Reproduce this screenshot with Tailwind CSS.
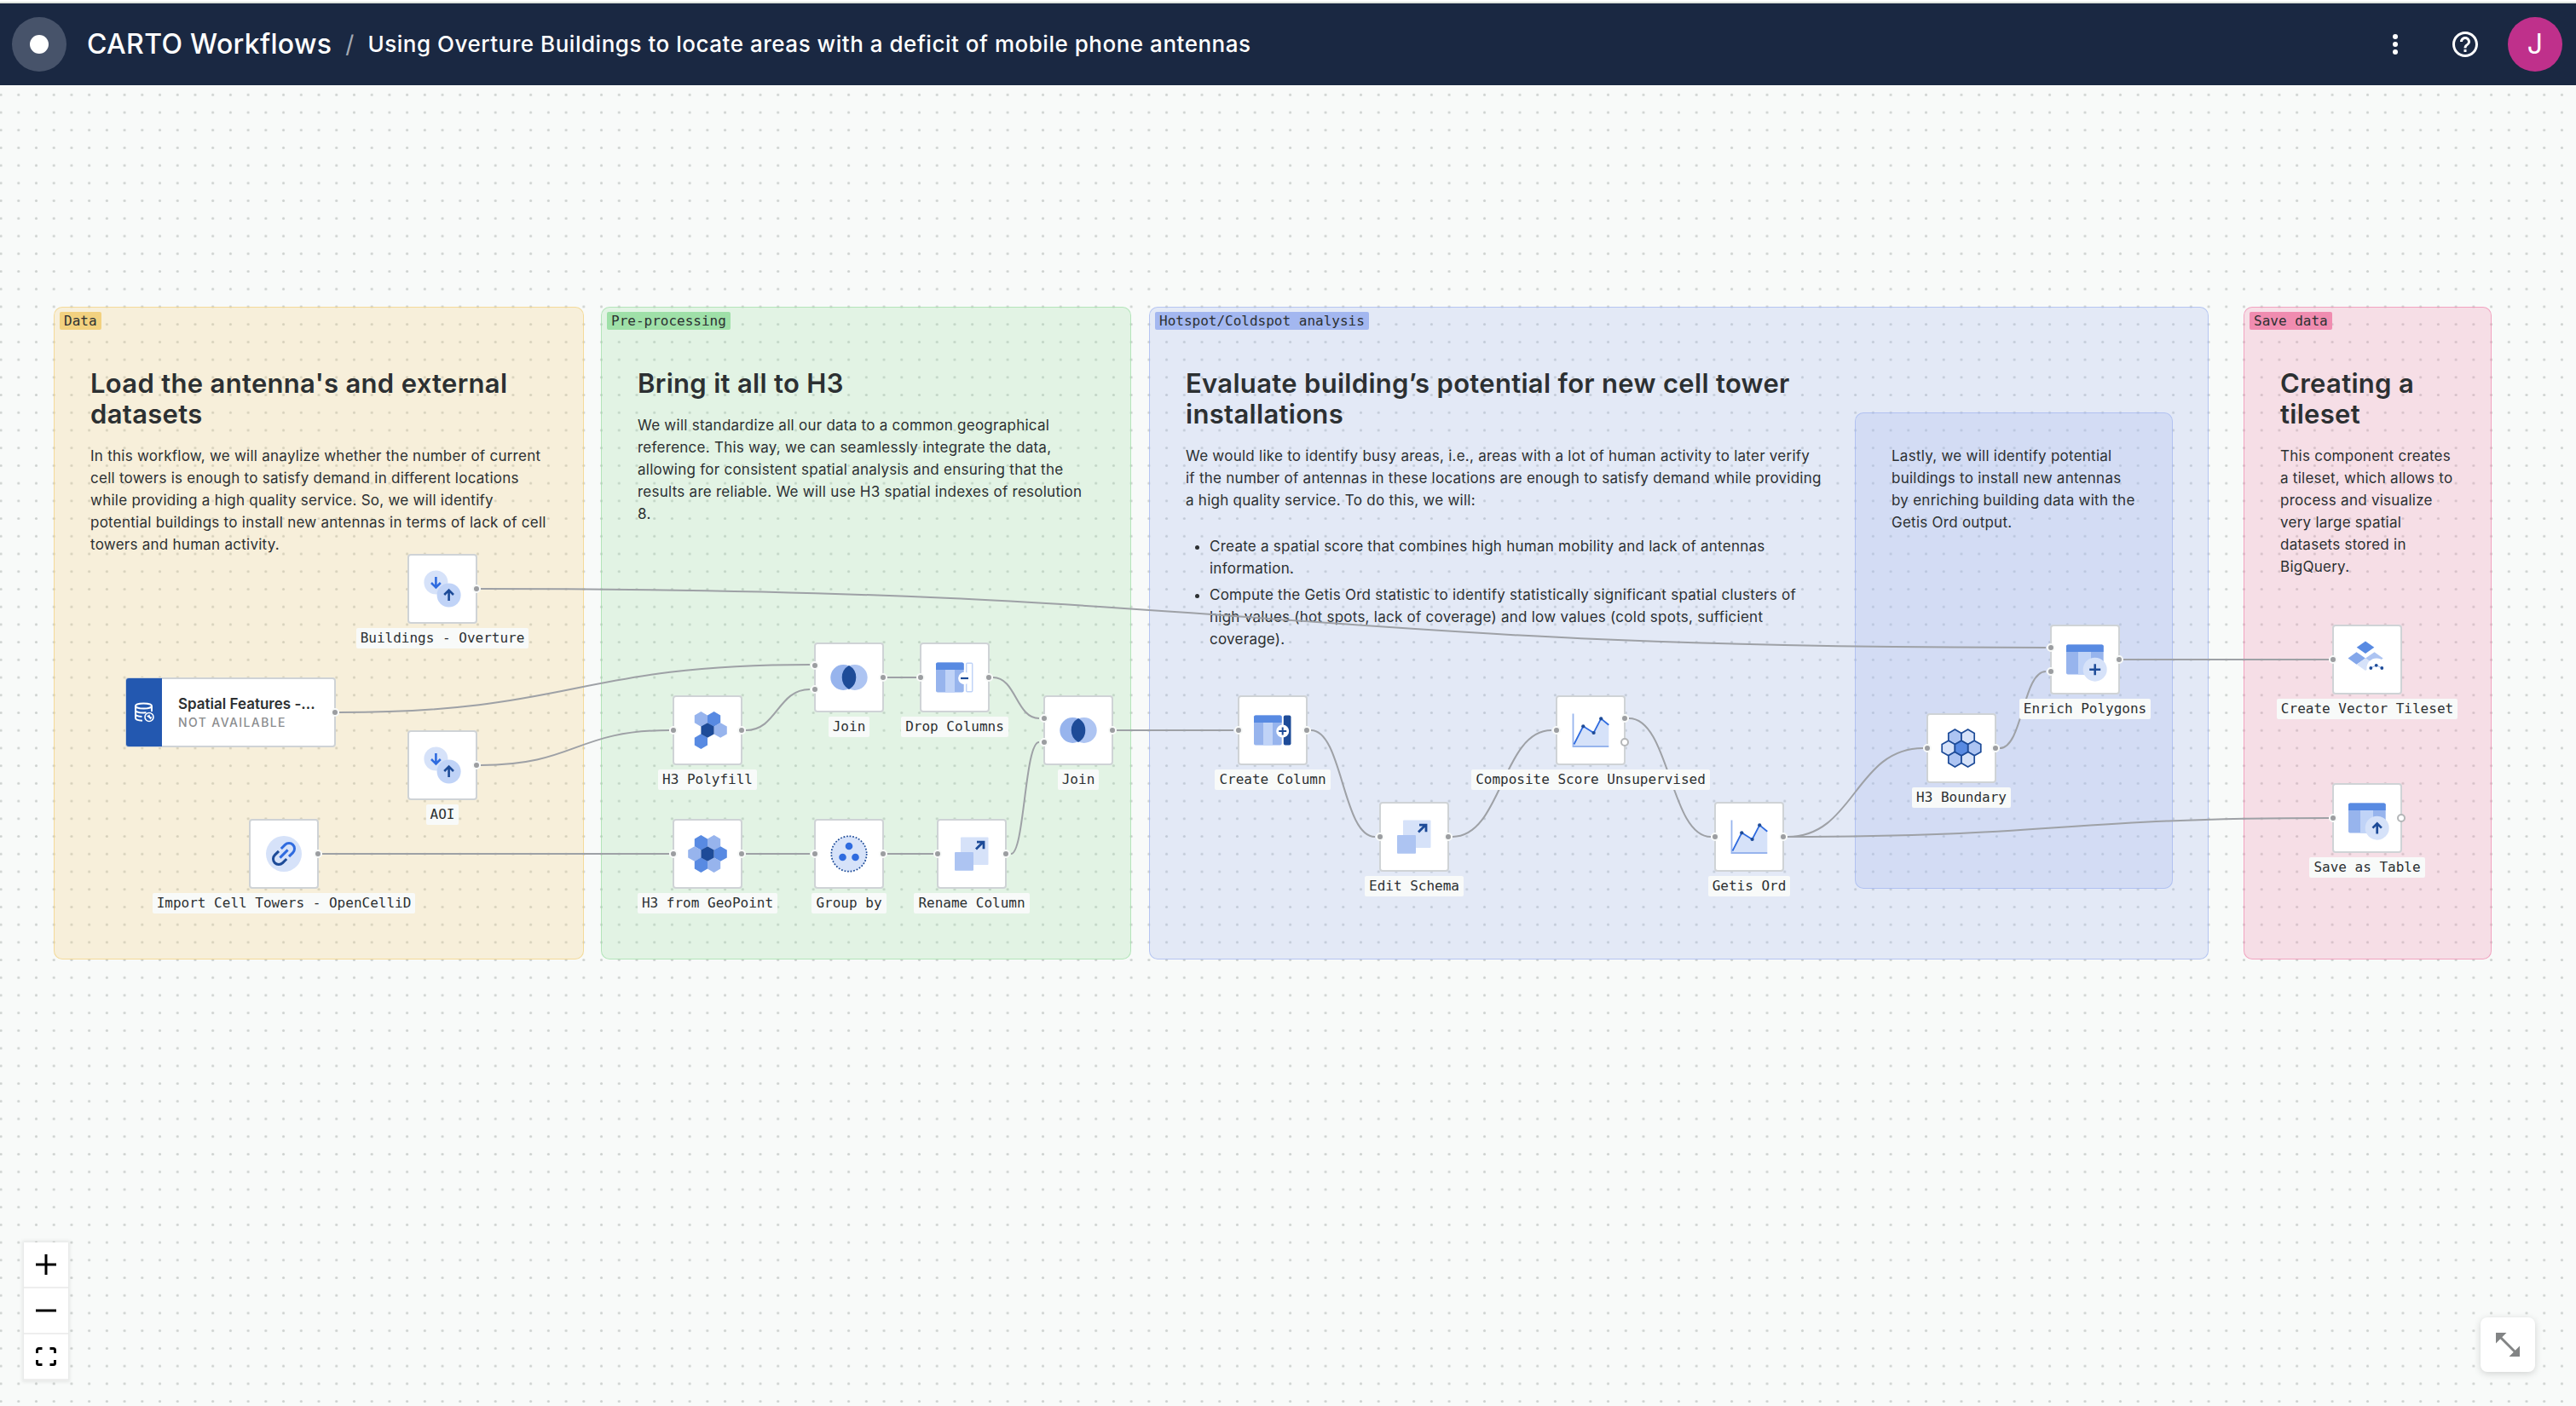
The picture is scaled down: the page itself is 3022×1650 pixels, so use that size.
<!DOCTYPE html>
<html lang="en">
<head>
<meta charset="utf-8">
<meta name="viewport" content="width=device-width, initial-scale=1">
<title>CARTO Workflows</title>
<script src="https://cdn.jsdelivr.net/npm/@tailwindcss/browser@4"></script>
</head>
<body class="flex h-screen flex-col overflow-hidden bg-[#f8faf9] font-['Inter',sans-serif] text-[#2c3032]">

<!-- Shared icons, drawn around the centre of a 48 x 48 box -->
<svg class="hidden" aria-hidden="true">
  <defs>
    <path id="hex" d="M0-8.8 7.6-4.4V4.4L0 8.8-7.6 4.4V-4.4Z"/>
    <symbol id="i-import" viewBox="-24 -24 48 48">
      <circle cx="-7.6" cy="-7.5" r="14" fill="#d6e2f9"/><circle cx="7.6" cy="7.5" r="14" fill="#c0d3f7"/>
      <path d="M-7.6-14V-1.5M-13-7l5.4 5.4L-2.2-7" fill="none" stroke="#2f6bdf" stroke-width="2.6"/>
      <path d="M7.6 14V1.5M2.2 7l5.4-5.4L13 7" fill="none" stroke="#1d4b98" stroke-width="2.6"/>
    </symbol>
    <symbol id="i-link" viewBox="-24 -24 48 48">
      <circle r="21" fill="#d6e2f9"/>
      <g transform="rotate(-45)" fill="none" stroke-width="3">
        <path d="M-2-6.5h-6.5a6.5 6.5 0 0 0 0 13H-2" stroke="#1d4b98"/>
        <path d="M2-6.5h6.5a6.5 6.5 0 0 1 0 13H2M-6.5 0h13" stroke="#2f6bdf"/>
      </g>
    </symbol>
    <symbol id="i-polyfill" viewBox="-24 -24 48 48">
      <use href="#hex" x="-7.6" y="-13.1" fill="#97b4ed"/><use href="#hex" x="7.6" y="-13.1" fill="#588ae2"/>
      <use href="#hex" x="15.2" fill="#97b4ed"/><use href="#hex" x="-7.6" y="13.1" fill="#588ae2"/><use href="#hex" fill="#1d4b98"/>
    </symbol>
    <symbol id="i-geopoint" viewBox="-24 -24 48 48">
      <use href="#hex" x="-7.6" y="-13.1" fill="#588ae2"/><use href="#hex" x="7.6" y="-13.1" fill="#97b4ed"/>
      <use href="#hex" x="-15.2" fill="#97b4ed"/><use href="#hex" x="15.2" fill="#588ae2"/>
      <use href="#hex" x="-7.6" y="13.1" fill="#588ae2"/><use href="#hex" x="7.6" y="13.1" fill="#97b4ed"/><use href="#hex" fill="#1d4b98"/>
    </symbol>
    <symbol id="i-boundary" viewBox="-24 -24 48 48">
      <g stroke="#1d4b98" stroke-width="1.7">
        <use href="#hex" x="-7.6" y="-13.1" fill="#adc4f2"/><use href="#hex" x="7.6" y="-13.1" fill="#d6e2f9"/>
        <use href="#hex" x="-15.2" fill="#d6e2f9"/><use href="#hex" x="15.2" fill="#adc4f2"/>
        <use href="#hex" x="-7.6" y="13.1" fill="#adc4f2"/><use href="#hex" x="7.6" y="13.1" fill="#d6e2f9"/><use href="#hex" fill="#588ae2"/>
      </g>
    </symbol>
    <symbol id="i-join" viewBox="-24 -24 48 48">
      <circle cx="6.7" r="15" fill="#adc4f2"/><circle cx="-6.7" r="15" fill="#97b4ed"/>
      <path d="M0-14A16 16 0 0 1 0 14A16 16 0 0 1 0-14Z" fill="#1d4b98"/>
    </symbol>
    <symbol id="i-drop" viewBox="-24 -24 48 48">
      <rect x="-22" y="-17.5" width="32.7" height="35" rx="2" fill="#97b4ed"/><rect x="-11" y="-9" width="11" height="26.5" fill="#c0d3f7"/>
      <path d="M-20-17.5H8.700a2 2 0 0 1 2 2V-9H-22v-6.500a2 2 0 0 1 2-2Z" fill="#588ae2"/>
      <rect x="13.700" y="-16.700" width="7" height="33.400" rx="1" fill="#fff" stroke="#c0d3f7" stroke-width="1.500"/>
      <circle cx="11.300" cy="1" r="7.200" fill="#fff"/><path d="M7 1h9" stroke="#1d4b98" stroke-width="2.200"/>
    </symbol>
    <symbol id="i-create" viewBox="-24 -24 48 48">
      <rect x="-22" y="-17.5" width="32.7" height="35" rx="2" fill="#97b4ed"/><rect x="-11" y="-9" width="11" height="26.5" fill="#c0d3f7"/>
      <path d="M-20-17.5H8.700a2 2 0 0 1 2 2V-9H-22v-6.500a2 2 0 0 1 2-2Z" fill="#588ae2"/>
      <rect x="12.800" y="-17.500" width="8.700" height="35" rx="2" fill="#1d4b98"/>
      <circle cx="11.700" cy="1" r="7.500" fill="#fff"/><path d="M7.200 1h9M11.700-3.500v9" stroke="#1d4b98" stroke-width="2"/>
    </symbol>
    <symbol id="table" viewBox="-24 -24 48 48">
      <rect x="-22" y="-17.5" width="43.7" height="35" rx="2" fill="#97b4ed"/><rect x="-8" y="-9" width="15" height="26.5" fill="#c0d3f7"/>
      <path d="M-20-17.5H19.700a2 2 0 0 1 2 2V-9H-22v-6.500a2 2 0 0 1 2-2Z" fill="#588ae2"/>
    </symbol>
    <symbol id="i-enrich" viewBox="-26 -26 52 52">
      <use href="#table" x="-24" y="-24" width="48" height="48"/>
      <circle cx="11.700" cy="11.700" r="14" fill="#d6e2f9"/><path d="M5.200 11.700h13M11.700 5.200v13" stroke="#1d4b98" stroke-width="2.500"/>
    </symbol>
    <symbol id="i-save" viewBox="-26 -26 52 52">
      <use href="#table" x="-24" y="-24" width="48" height="48"/>
      <circle cx="11.700" cy="11.700" r="14" fill="#d6e2f9"/><path d="M11.700 18.500V6.500M6.500 11.600l5.200-5.200 5.200 5.200" fill="none" stroke="#1d4b98" stroke-width="2.700"/>
    </symbol>
    <symbol id="i-group" viewBox="-24 -24 48 48">
      <circle r="20.700" fill="#d6e2f9" stroke="#1d4b98" stroke-width="1.700" stroke-dasharray="1.800 1.812"/>
      <g fill="#2f6bdf"><circle cy="-9" r="4.300"/><circle cx="-7.500" cy="4" r="4.300"/><circle cx="7.500" cy="4" r="4.300"/></g>
    </symbol>
    <symbol id="i-schema" viewBox="-24 -24 48 48">
      <rect x="-13" y="-19.500" width="32.500" height="32.500" rx="1" fill="#d6e2f9"/><rect x="-20" y="-2" width="22" height="21.700" rx="1" fill="#adc4f2"/>
      <path d="M5-5.500 13.500-14M6-13.800h8v8" fill="none" stroke="#1d4b98" stroke-width="2.800"/>
    </symbol>
    <symbol id="i-chart" viewBox="-24 -24 48 48">
      <path d="M-20 18-8.700-4.700 3.600 3 12.200-13.700 21.300-6.300V18Z" fill="#d6e2f9"/>
      <path d="M-20.500-19.500V19H21.300" fill="none" stroke="#97b4ed" stroke-width="1.800"/>
      <path d="M-19.500 16.500-8.700-4.700 3.600 3 12.200-13.700 21.300-6.300" fill="none" stroke="#2f6bdf" stroke-width="1.800"/>
      <g fill="#1d4b98"><circle cx="-8.700" cy="-4.700" r="2.100"/><circle cx="3.600" cy="3" r="2.100"/><circle cx="12.200" cy="-13.700" r="2.100"/></g>
    </symbol>
    <symbol id="i-tileset" viewBox="-24 -24 48 48">
      <path d="M-2-21.500 8.300-14.300-2-7-12.300-14.300Z" fill="#588ae2"/><path d="M-12.500-8.700-2-1.500-12.500 5.700-22.500-1.500Z" fill="#84a7ea"/>
      <path d="M8.500-8.700 18.700-1.500 8.500 5.700-2-1.500Z" fill="#adc4f2"/><path d="M-2-1.500 8.300 5.700-2 13-12.300 5.700Z" fill="#d6e2f9"/>
      <circle cx="11" cy="10" r="11.500" fill="#fff"/><path d="M4.300 10 10.700 6.800 17.300 10" fill="none" stroke="#97b4ed" stroke-width="1"/>
      <g fill="#1d4b98"><circle cx="4.300" cy="10" r="1.900"/><circle cx="10.700" cy="6.800" r="1.900"/><circle cx="17.300" cy="10" r="1.900"/></g>
    </symbol>
  </defs>
</svg>

<div class="border-b-2 border-[#dfe5df] bg-white pt-0.5"></div>
<header class="flex h-24 shrink-0 items-center bg-[#1a2842] pr-4 pl-3.5 text-white">
  <button type="button" aria-label="Workflows home" class="flex size-16 items-center justify-center rounded-full bg-[#47536a]"><span class="size-[22px] rounded-full bg-white"></span></button>
  <nav aria-label="Breadcrumb" class="ml-6 flex items-center whitespace-nowrap font-medium">
    <a href="#" class="text-[32px] leading-10 tracking-[0.01em]">CARTO Workflows</a>
    <span class="mx-4 text-[28px] leading-10 font-normal text-[#a3a9b3]">/</span>
    <h1 class="text-[26px] leading-10 tracking-[0.02em]">Using Overture Buildings to locate areas with a deficit of mobile phone antennas</h1>
  </nav>
  <div class="ml-auto flex items-center">
    <button type="button" aria-label="More options" class="flex size-12 items-center justify-center"><svg class="size-9" viewBox="0 0 36 36" fill="#fff"><circle cx="18" cy="9" r="3"/><circle cx="18" cy="18" r="3"/><circle cx="18" cy="27" r="3"/></svg></button>
    <button type="button" aria-label="Help" class="ml-[34px] flex size-12 items-center justify-center"><svg class="size-9" viewBox="0 0 24 24" fill="#fff"><path d="M11 18h2v-2h-2v2zm1-16C6.480 2 2 6.480 2 12s4.480 10 10 10 10-4.480 10-10S17.520 2 12 2zm0 18c-4.410 0-8-3.590-8-8s3.590-8 8-8 8 3.590 8 8-3.590 8-8 8zm0-14c-2.210 0-4 1.790-4 4h2c0-1.100.900-2 2-2s2 .900 2 2c0 2-3 1.750-3 5h2c0-2.250 3-2.500 3-5 0-2.210-1.790-4-4-4z"/></svg></button>
    <button type="button" aria-label="Account" class="ml-[26px] flex size-16 items-center justify-center rounded-full bg-[#bf308b] text-[32px]">J</button>
  </div>
</header>

<main class="relative flex-1 overflow-hidden">
  <!-- Dotted grid -->
  <svg class="absolute inset-0 size-full" aria-hidden="true">
    <defs><pattern id="grid" width="20" height="20" patternUnits="userSpaceOnUse" patternTransform="translate(-9.300 .900) scale(1.036)"><circle cx="10" cy="10" r="1.500" fill="#cdd1cf"/></pattern></defs>
    <rect width="100%" height="100%" fill="url(#grid)"/>
  </svg>

  <!-- Notes -->
  <section class="absolute top-[260px] left-[63px] h-[766px] w-[622px] rounded-[10px] border border-[#f2d17f]/70 bg-[#f2d17f]/25 px-[42px] pt-[71px]">
    <span class="absolute top-[5px] left-1.5 rounded-xs bg-[#f2d17f] px-[5px] font-['DejaVu_Sans_Mono',monospace] text-base leading-[21px]">Data</span>
    <h2 class="text-[31px] leading-9 font-semibold tracking-[0.01em]">Load the antenna's and external datasets</h2>
    <p class="mt-[18px] text-[17px] leading-[26px] tracking-[0.015em]">In this workflow, we will anaylize whether the number of current cell towers is enough to satisfy demand in different locations while providing a high quality service. So, we will identify potential buildings to install new antennas in terms of lack of cell towers and human activity.</p>
  </section>
  <section class="absolute top-[260px] left-[705px] h-[766px] w-[622px] rounded-[10px] border border-[#9fe0a8]/70 bg-[#9fe0a8]/25 px-[42px] pt-[71px]">
    <span class="absolute top-[5px] left-1.5 rounded-xs bg-[#9fe0a8] px-[5px] font-['DejaVu_Sans_Mono',monospace] text-base leading-[21px]">Pre-processing</span>
    <h2 class="text-[31px] leading-9 font-semibold tracking-[0.01em]">Bring it all to H3</h2>
    <p class="mt-[18px] text-[17px] leading-[26px] tracking-[0.015em]">We will standardize all our data to a common geographical reference. This way, we can seamlessly integrate the data, allowing for consistent spatial analysis and ensuring that the results are reliable. We will use H3 spatial indexes of resolution 8.</p>
  </section>
  <section class="absolute top-[260px] left-[1348px] h-[766px] w-[1243px] rounded-[10px] border border-[#a3b7f0]/70 bg-[#a3b7f0]/25 px-[42px] pt-[71px]">
    <span class="absolute top-[5px] left-1.5 rounded-xs bg-[#a3b7f0] px-[5px] font-['DejaVu_Sans_Mono',monospace] text-base leading-[21px]">Hotspot/Coldspot analysis</span>
    <div class="w-[750px]">
      <h2 class="text-[31px] leading-9 font-semibold tracking-[0.01em]">Evaluate building’s potential for new cell tower installations</h2>
      <p class="mt-[18px] text-[17px] leading-[26px] tracking-[0.015em]">We would like to identify busy areas, i.e., areas with a lot of human activity to later verify<br>if the number of antennas in these locations are enough to satisfy demand while providing a high quality service. To do this, we will:</p>
      <ul class="mt-7 flex list-disc flex-col gap-[5px] pl-7 text-[17px] leading-[26px] tracking-[0.015em]">
        <li>Create a spatial score that combines high human mobility and lack of antennas information.</li>
        <li>Compute the Getis Ord statistic to identify statistically significant spatial clusters of high values (hot spots, lack of coverage) and low values (cold spots, sufficient coverage).</li>
      </ul>
    </div>
  </section>
  <section class="absolute top-[384px] left-[2176px] h-[559px] w-[373px] rounded-[10px] border border-[#a3b7f0]/70 bg-[#a3b7f0]/25 px-[42px] pt-[37px]">
    <p class="text-[17px] leading-[26px] tracking-[0.015em]">Lastly, we will identify potential buildings to install new antennas by enriching building data with the Getis Ord output.</p>
  </section>
  <section class="absolute top-[260px] left-[2632px] h-[766px] w-[291px] rounded-[10px] border border-[#f08cb0]/70 bg-[#f08cb0]/25 px-[42px] pt-[71px]">
    <span class="absolute top-[5px] left-1.5 rounded-xs bg-[#f08cb0] px-[5px] font-['DejaVu_Sans_Mono',monospace] text-base leading-[21px]">Save data</span>
    <h2 class="text-[31px] leading-9 font-semibold tracking-[0.01em]">Creating a tileset</h2>
    <p class="mt-[18px] text-[17px] leading-[26px] tracking-[0.015em]">This component creates a tileset, which allows to process and visualize very large spatial datasets stored in BigQuery.</p>
  </section>

  <!-- Connections -->
  <svg class="absolute inset-0 size-full" fill="none" stroke="#9ea1a6" stroke-width="2" aria-hidden="true">
    <path d="M564 591C1482 591 1482 660 2400 660"/>
    <path d="M398 736C674 736 674 680 950 680"/>
    <path d="M564 798C675 798 675 757 785 757"/>
    <path d="M378 902H785M875 902H950M1041 902H1095M1041 695H1075M1310 757H1447M2491 674H2732"/>
    <path d="M875 757C912 757 912 709 950 709"/>
    <path d="M1165 695C1192 695 1192 743 1219 743"/>
    <path d="M1186 902C1202 902 1202 771 1219 771"/>
    <path d="M1538 757C1575 757 1575 882 1613 882"/>
    <path d="M1704 882C1762 882 1762 757 1820 757"/>
    <path d="M1911 743C1959 743 1959 882 2007 882"/>
    <path d="M2097 882C2176 882 2176 778 2256 778"/>
    <path d="M2097 882C2415 882 2415 860 2732 860"/>
    <path d="M2346 778C2373 778 2373 688 2400 688"/>
  </svg>

  <!-- Nodes -->
  <article class="absolute top-[695px] left-[147px] flex h-[82px] w-[247px] rounded border-2 border-[#cfd3d6] bg-white">
    <div class="-my-px -ml-px flex w-[42px] shrink-0 items-center justify-center rounded-l-[3px] bg-[#2358b0]">
      <svg class="size-6" viewBox="0 0 24 24" fill="none" stroke="#fff" stroke-width="2"><ellipse cx="11.500" cy="4.500" rx="9.500" ry="3"/><path d="M2 4.500v14c0 1.700 3.500 3 8 3.200M21 4.500V11M2 9.500c0 1.600 4 3 9.500 3 1.500 0 2-.1 3-.2M2 14c0 1.600 3 2.800 7.500 3"/><circle cx="18" cy="17.500" r="5" fill="#2358b0" stroke-width="1.600"/><path d="M15 16.500l3.500-2 .5 2.500 2.500.5-2 3-1.500-2Z" fill="#fff" stroke="none"/></svg>
    </div>
    <div class="flex min-w-0 flex-1 flex-col justify-center px-[19px]">
      <h3 class="overflow-hidden text-[17px] leading-6 font-semibold text-ellipsis whitespace-nowrap">Spatial Features -...</h3>
      <p class="text-sm leading-5 font-medium tracking-widest whitespace-nowrap text-[#8a8c8e]">NOT AVAILABLE</p>
    </div>
    <span class="absolute top-[34px] -right-[6px] size-2.5 rounded-full border-2 border-[#f8faf9] bg-[#9b9da0]"></span>
  </article>

  <article class="absolute top-[550px] left-[478px] flex w-[82px] flex-col items-center gap-[5px]">
    <div class="relative flex size-[82px] items-center justify-center rounded border-2 border-[#cfd3d6] bg-white"><svg class="size-12"><use href="#i-import"/></svg>
      <span class="absolute top-[34px] -right-[6px] size-2.5 rounded-full border-2 border-[#f8faf9] bg-[#9b9da0]"></span></div>
    <h3 class="rounded-xs bg-[#f8faf9] px-[5px] font-['DejaVu_Sans_Mono',monospace] text-base leading-6 whitespace-nowrap">Buildings - Overture</h3>
  </article>
  <article class="absolute top-[757px] left-[478px] flex w-[82px] flex-col items-center gap-[5px]">
    <div class="relative flex size-[82px] items-center justify-center rounded border-2 border-[#cfd3d6] bg-white"><svg class="size-12"><use href="#i-import"/></svg>
      <span class="absolute top-[34px] -right-[6px] size-2.5 rounded-full border-2 border-[#f8faf9] bg-[#9b9da0]"></span></div>
    <h3 class="rounded-xs bg-[#f8faf9] px-[5px] font-['DejaVu_Sans_Mono',monospace] text-base leading-6 whitespace-nowrap">AOI</h3>
  </article>
  <article class="absolute top-[861px] left-[292px] flex w-[82px] flex-col items-center gap-[5px]">
    <div class="relative flex size-[82px] items-center justify-center rounded border-2 border-[#cfd3d6] bg-white"><svg class="size-12"><use href="#i-link"/></svg>
      <span class="absolute top-[34px] -right-[6px] size-2.5 rounded-full border-2 border-[#f8faf9] bg-[#9b9da0]"></span></div>
    <h3 class="rounded-xs bg-[#f8faf9] px-[5px] font-['DejaVu_Sans_Mono',monospace] text-base leading-6 whitespace-nowrap">Import Cell Towers - OpenCelliD</h3>
  </article>

  <article class="absolute top-[716px] left-[789px] flex w-[82px] flex-col items-center gap-[5px]">
    <div class="relative flex size-[82px] items-center justify-center rounded border-2 border-[#cfd3d6] bg-white"><svg class="size-12"><use href="#i-polyfill"/></svg>
      <span class="absolute top-[34px] -left-[6px] size-2.5 rounded-full border-2 border-[#f8faf9] bg-[#9b9da0]"></span>
      <span class="absolute top-[34px] -right-[6px] size-2.5 rounded-full border-2 border-[#f8faf9] bg-[#9b9da0]"></span></div>
    <h3 class="rounded-xs bg-[#f8faf9] px-[5px] font-['DejaVu_Sans_Mono',monospace] text-base leading-6 whitespace-nowrap">H3 Polyfill</h3>
  </article>
  <article class="absolute top-[654px] left-[955px] flex w-[82px] flex-col items-center gap-[5px]">
    <div class="relative flex size-[82px] items-center justify-center rounded border-2 border-[#cfd3d6] bg-white"><svg class="size-12"><use href="#i-join"/></svg>
      <span class="absolute top-5 -left-[6px] size-2.5 rounded-full border-2 border-[#f8faf9] bg-[#9b9da0]"></span>
      <span class="absolute top-12 -left-[6px] size-2.5 rounded-full border-2 border-[#f8faf9] bg-[#9b9da0]"></span>
      <span class="absolute top-[34px] -right-[6px] size-2.5 rounded-full border-2 border-[#f8faf9] bg-[#9b9da0]"></span></div>
    <h3 class="rounded-xs bg-[#f8faf9] px-[5px] font-['DejaVu_Sans_Mono',monospace] text-base leading-6 whitespace-nowrap">Join</h3>
  </article>
  <article class="absolute top-[654px] left-[1079px] flex w-[82px] flex-col items-center gap-[5px]">
    <div class="relative flex size-[82px] items-center justify-center rounded border-2 border-[#cfd3d6] bg-white"><svg class="size-12"><use href="#i-drop"/></svg>
      <span class="absolute top-[34px] -left-[6px] size-2.5 rounded-full border-2 border-[#f8faf9] bg-[#9b9da0]"></span>
      <span class="absolute top-[34px] -right-[6px] size-2.5 rounded-full border-2 border-[#f8faf9] bg-[#9b9da0]"></span></div>
    <h3 class="rounded-xs bg-[#f8faf9] px-[5px] font-['DejaVu_Sans_Mono',monospace] text-base leading-6 whitespace-nowrap">Drop Columns</h3>
  </article>
  <article class="absolute top-[716px] left-[1224px] flex w-[82px] flex-col items-center gap-[5px]">
    <div class="relative flex size-[82px] items-center justify-center rounded border-2 border-[#cfd3d6] bg-white"><svg class="size-12"><use href="#i-join"/></svg>
      <span class="absolute top-5 -left-[6px] size-2.5 rounded-full border-2 border-[#f8faf9] bg-[#9b9da0]"></span>
      <span class="absolute top-12 -left-[6px] size-2.5 rounded-full border-2 border-[#f8faf9] bg-[#9b9da0]"></span>
      <span class="absolute top-[34px] -right-[6px] size-2.5 rounded-full border-2 border-[#f8faf9] bg-[#9b9da0]"></span></div>
    <h3 class="rounded-xs bg-[#f8faf9] px-[5px] font-['DejaVu_Sans_Mono',monospace] text-base leading-6 whitespace-nowrap">Join</h3>
  </article>
  <article class="absolute top-[861px] left-[789px] flex w-[82px] flex-col items-center gap-[5px]">
    <div class="relative flex size-[82px] items-center justify-center rounded border-2 border-[#cfd3d6] bg-white"><svg class="size-12"><use href="#i-geopoint"/></svg>
      <span class="absolute top-[34px] -left-[6px] size-2.5 rounded-full border-2 border-[#f8faf9] bg-[#9b9da0]"></span>
      <span class="absolute top-[34px] -right-[6px] size-2.5 rounded-full border-2 border-[#f8faf9] bg-[#9b9da0]"></span></div>
    <h3 class="rounded-xs bg-[#f8faf9] px-[5px] font-['DejaVu_Sans_Mono',monospace] text-base leading-6 whitespace-nowrap">H3 from GeoPoint</h3>
  </article>
  <article class="absolute top-[861px] left-[955px] flex w-[82px] flex-col items-center gap-[5px]">
    <div class="relative flex size-[82px] items-center justify-center rounded border-2 border-[#cfd3d6] bg-white"><svg class="size-12"><use href="#i-group"/></svg>
      <span class="absolute top-[34px] -left-[6px] size-2.5 rounded-full border-2 border-[#f8faf9] bg-[#9b9da0]"></span>
      <span class="absolute top-[34px] -right-[6px] size-2.5 rounded-full border-2 border-[#f8faf9] bg-[#9b9da0]"></span></div>
    <h3 class="rounded-xs bg-[#f8faf9] px-[5px] font-['DejaVu_Sans_Mono',monospace] text-base leading-6 whitespace-nowrap">Group by</h3>
  </article>
  <article class="absolute top-[861px] left-[1099px] flex w-[82px] flex-col items-center gap-[5px]">
    <div class="relative flex size-[82px] items-center justify-center rounded border-2 border-[#cfd3d6] bg-white"><svg class="size-12"><use href="#i-schema"/></svg>
      <span class="absolute top-[34px] -left-[6px] size-2.5 rounded-full border-2 border-[#f8faf9] bg-[#9b9da0]"></span>
      <span class="absolute top-[34px] -right-[6px] size-2.5 rounded-full border-2 border-[#f8faf9] bg-[#9b9da0]"></span></div>
    <h3 class="rounded-xs bg-[#f8faf9] px-[5px] font-['DejaVu_Sans_Mono',monospace] text-base leading-6 whitespace-nowrap">Rename Column</h3>
  </article>

  <article class="absolute top-[716px] left-[1452px] flex w-[82px] flex-col items-center gap-[5px]">
    <div class="relative flex size-[82px] items-center justify-center rounded border-2 border-[#cfd3d6] bg-white"><svg class="size-12"><use href="#i-create"/></svg>
      <span class="absolute top-[34px] -left-[6px] size-2.5 rounded-full border-2 border-[#f8faf9] bg-[#9b9da0]"></span>
      <span class="absolute top-[34px] -right-[6px] size-2.5 rounded-full border-2 border-[#f8faf9] bg-[#9b9da0]"></span></div>
    <h3 class="rounded-xs bg-[#f8faf9] px-[5px] font-['DejaVu_Sans_Mono',monospace] text-base leading-6 whitespace-nowrap">Create Column</h3>
  </article>
  <article class="absolute top-[841px] left-[1618px] flex w-[82px] flex-col items-center gap-[5px]">
    <div class="relative flex size-[82px] items-center justify-center rounded border-2 border-[#cfd3d6] bg-white"><svg class="size-12"><use href="#i-schema"/></svg>
      <span class="absolute top-[34px] -left-[6px] size-2.5 rounded-full border-2 border-[#f8faf9] bg-[#9b9da0]"></span>
      <span class="absolute top-[34px] -right-[6px] size-2.5 rounded-full border-2 border-[#f8faf9] bg-[#9b9da0]"></span></div>
    <h3 class="rounded-xs bg-[#f8faf9] px-[5px] font-['DejaVu_Sans_Mono',monospace] text-base leading-6 whitespace-nowrap">Edit Schema</h3>
  </article>
  <article class="absolute top-[716px] left-[1825px] flex w-[82px] flex-col items-center gap-[5px]">
    <div class="relative flex size-[82px] items-center justify-center rounded border-2 border-[#cfd3d6] bg-white"><svg class="size-12"><use href="#i-chart"/></svg>
      <span class="absolute top-[34px] -left-[6px] size-2.5 rounded-full border-2 border-[#f8faf9] bg-[#9b9da0]"></span>
      <span class="absolute top-5 -right-[6px] size-2.5 rounded-full border-2 border-[#f8faf9] bg-[#9b9da0]"></span>
      <span class="absolute top-12 -right-[6px] size-2.5 rounded-full border-2 border-[#b4b6b8] bg-white"></span></div>
    <h3 class="rounded-xs bg-[#f8faf9] px-[5px] font-['DejaVu_Sans_Mono',monospace] text-base leading-6 whitespace-nowrap">Composite Score Unsupervised</h3>
  </article>
  <article class="absolute top-[841px] left-[2011px] flex w-[82px] flex-col items-center gap-[5px]">
    <div class="relative flex size-[82px] items-center justify-center rounded border-2 border-[#cfd3d6] bg-white"><svg class="size-12"><use href="#i-chart"/></svg>
      <span class="absolute top-[34px] -left-[6px] size-2.5 rounded-full border-2 border-[#f8faf9] bg-[#9b9da0]"></span>
      <span class="absolute top-[34px] -right-[6px] size-2.5 rounded-full border-2 border-[#f8faf9] bg-[#9b9da0]"></span></div>
    <h3 class="rounded-xs bg-[#f8faf9] px-[5px] font-['DejaVu_Sans_Mono',monospace] text-base leading-6 whitespace-nowrap">Getis Ord</h3>
  </article>
  <article class="absolute top-[737px] left-[2260px] flex w-[82px] flex-col items-center gap-[5px]">
    <div class="relative flex size-[82px] items-center justify-center rounded border-2 border-[#cfd3d6] bg-white"><svg class="size-12"><use href="#i-boundary"/></svg>
      <span class="absolute top-[34px] -left-[6px] size-2.5 rounded-full border-2 border-[#f8faf9] bg-[#9b9da0]"></span>
      <span class="absolute top-[34px] -right-[6px] size-2.5 rounded-full border-2 border-[#f8faf9] bg-[#9b9da0]"></span></div>
    <h3 class="rounded-xs bg-[#f8faf9] px-[5px] font-['DejaVu_Sans_Mono',monospace] text-base leading-6 whitespace-nowrap">H3 Boundary</h3>
  </article>
  <article class="absolute top-[633px] left-[2405px] flex w-[82px] flex-col items-center gap-[5px]">
    <div class="relative flex size-[82px] items-center justify-center rounded border-2 border-[#cfd3d6] bg-white"><svg class="size-[52px]"><use href="#i-enrich"/></svg>
      <span class="absolute top-5 -left-[6px] size-2.5 rounded-full border-2 border-[#f8faf9] bg-[#9b9da0]"></span>
      <span class="absolute top-12 -left-[6px] size-2.5 rounded-full border-2 border-[#f8faf9] bg-[#9b9da0]"></span>
      <span class="absolute top-[34px] -right-[6px] size-2.5 rounded-full border-2 border-[#f8faf9] bg-[#9b9da0]"></span></div>
    <h3 class="rounded-xs bg-[#f8faf9] px-[5px] font-['DejaVu_Sans_Mono',monospace] text-base leading-6 whitespace-nowrap">Enrich Polygons</h3>
  </article>

  <article class="absolute top-[633px] left-[2736px] flex w-[82px] flex-col items-center gap-[5px]">
    <div class="relative flex size-[82px] items-center justify-center rounded border-2 border-[#cfd3d6] bg-white"><svg class="size-12"><use href="#i-tileset"/></svg>
      <span class="absolute top-[34px] -left-[6px] size-2.5 rounded-full border-2 border-[#f8faf9] bg-[#9b9da0]"></span></div>
    <h3 class="rounded-xs bg-[#f8faf9] px-[5px] font-['DejaVu_Sans_Mono',monospace] text-base leading-6 whitespace-nowrap">Create Vector Tileset</h3>
  </article>
  <article class="absolute top-[819px] left-[2736px] flex w-[82px] flex-col items-center gap-[5px]">
    <div class="relative flex size-[82px] items-center justify-center rounded border-2 border-[#cfd3d6] bg-white"><svg class="size-[52px]"><use href="#i-save"/></svg>
      <span class="absolute top-[34px] -left-[6px] size-2.5 rounded-full border-2 border-[#f8faf9] bg-[#9b9da0]"></span>
      <span class="absolute top-[34px] -right-[6px] size-2.5 rounded-full border-2 border-[#b4b6b8] bg-white"></span></div>
    <h3 class="rounded-xs bg-[#f8faf9] px-[5px] font-['DejaVu_Sans_Mono',monospace] text-base leading-6 whitespace-nowrap">Save as Table</h3>
  </article>

  <!-- Viewport controls -->
  <div class="absolute bottom-[30px] left-7 flex flex-col shadow-[0_0_4px_2px_rgba(0,0,0,0.08)]">
    <button type="button" aria-label="Zoom in" class="flex h-[54px] w-[52px] items-center justify-center border-b-2 border-[#eee] bg-white"><svg class="size-6" viewBox="0 0 24 24" stroke="#000" stroke-width="3"><path d="M0 12h24M12 0v24"/></svg></button>
    <button type="button" aria-label="Zoom out" class="flex h-[54px] w-[52px] items-center justify-center border-b-2 border-[#eee] bg-white"><svg class="size-6" viewBox="0 0 24 24" stroke="#000" stroke-width="3"><path d="M0 12h24"/></svg></button>
    <button type="button" aria-label="Fit view" class="flex h-[54px] w-[52px] items-center justify-center border-b-2 border-[#eee] bg-white"><svg class="size-6" viewBox="0 0 24 24" fill="none" stroke="#000" stroke-width="3"><path d="M1.500 8V4.500a2 2 0 0 1 2-2h4M16.500 2.500h4a2 2 0 0 1 2 2V8M22.500 16v3.500a2 2 0 0 1-2 2h-4M7.500 21.500h-4a2 2 0 0 1-2-2V16"/></svg></button>
  </div>
  <button type="button" aria-label="Expand panel" class="absolute right-12 bottom-10 flex size-16 items-center justify-center rounded-lg bg-white shadow-[0_2px_8px_rgba(0,0,0,0.16)]"><svg class="size-7" viewBox="0 0 28 28" fill="#828485"><path d="M0 0h12.500L0 12.500ZM28 28H15.500L28 15.500Z"/><path d="M5 5l18 18" stroke="#828485" stroke-width="3"/></svg></button>
</main>
</body>
</html>
